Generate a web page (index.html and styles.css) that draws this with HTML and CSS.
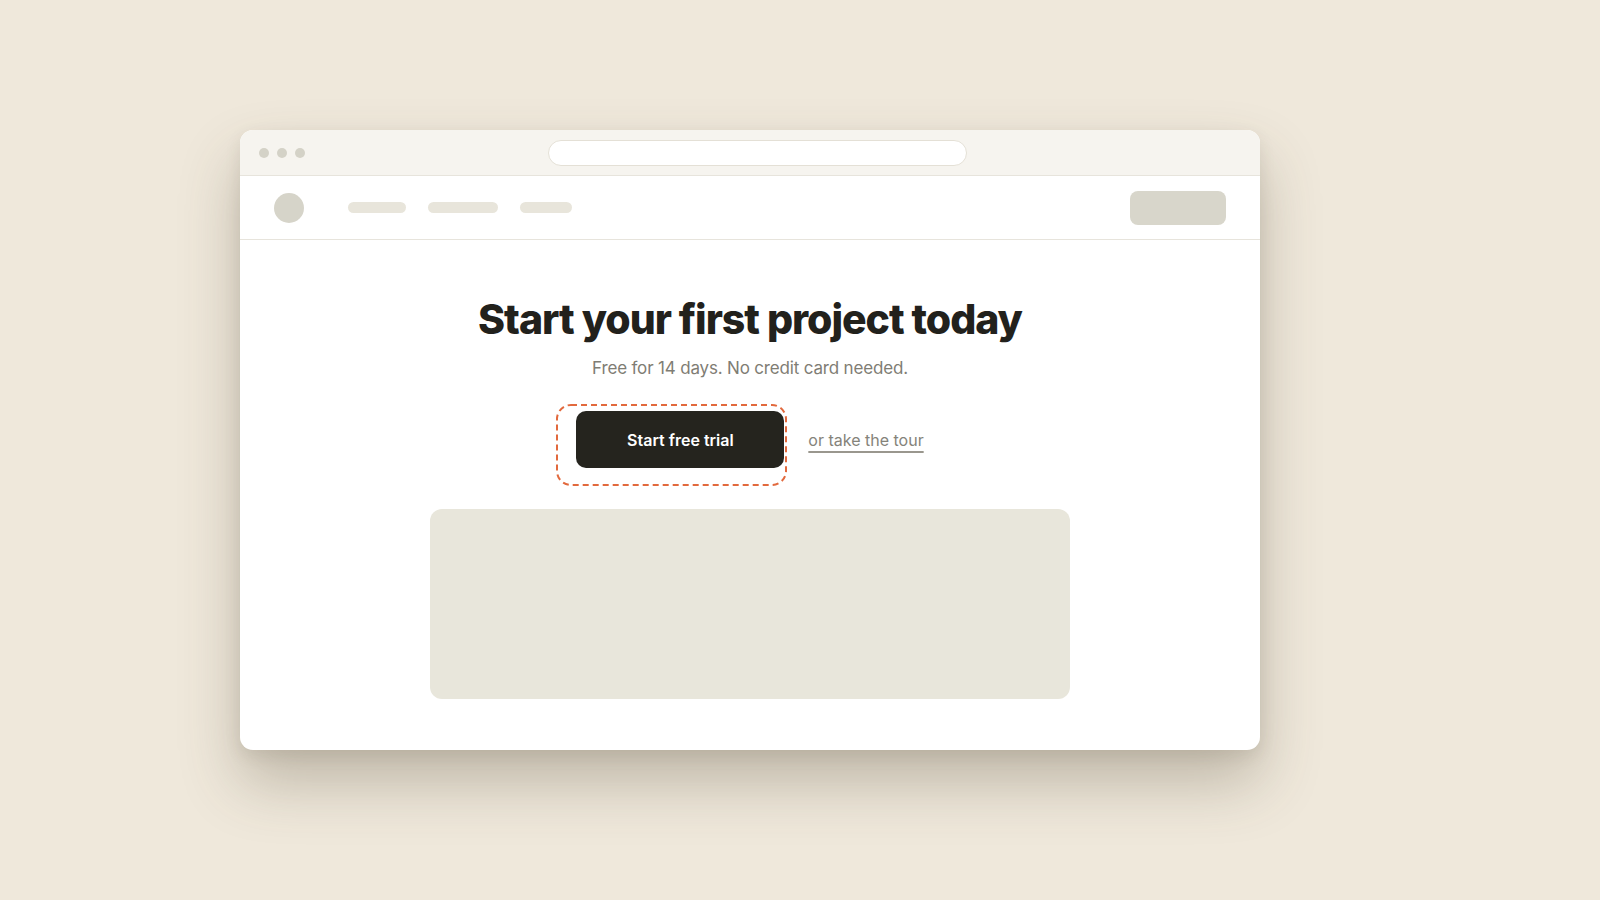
FILE: index.html
```html
<!DOCTYPE html>
<html lang="en">
<head>
    <meta charset="UTF-8">
    <meta name="viewport" content="width=device-width, initial-scale=1.0">
    <title>Start your first project today</title>
    <link rel="stylesheet" href="styles.css">
</head>
<body>
    <div class="window">
        <div class="titlebar">
            <div class="dots">
                <span class="dot"></span>
                <span class="dot"></span>
                <span class="dot"></span>
            </div>
            <div class="urlbar"></div>
        </div>

        <div class="nav">
            <div class="logo"></div>
            <div class="nav-links">
                <span class="pill" style="width: 58px;"></span>
                <span class="pill" style="width: 70px;"></span>
                <span class="pill" style="width: 52px;"></span>
            </div>
            <div class="nav-cta"></div>
        </div>

        <div class="hero">
            <h1>Start your first project today</h1>
            <p class="sub">Free for 14 days. No credit card needed.</p>

            <div class="actions">
                <div class="cta-wrap">
                    <!-- focus ring, drawn a little off the button -->
                    <svg class="ring" width="231" height="82" viewBox="0 0 231 82">
                        <rect x="1" y="1" width="229" height="80" rx="14" ry="14"
                              fill="none" stroke="#e2693d" stroke-width="2" stroke-dasharray="6 4"/>
                    </svg>
                    <button class="cta">Start free trial</button>
                </div>
                <a class="tour" href="#">or take the tour</a>
            </div>

            <div class="preview"></div>
        </div>
    </div>
</body>
</html>
```

FILE: styles.css
```css
body {
    margin: 0;
    padding: 130px 0 0 240px;
    background-color: #efe8db;
    font-family: Inter, "Noto Sans", sans-serif;
    height: 900px;
    box-sizing: border-box;
    overflow: hidden;
}
.window {
    width: 1020px;
    height: 620px;
    background: #fff;
    border-radius: 13px;
    overflow: hidden;
    box-shadow: 0 32px 60px rgba(80, 70, 50, 0.30), 0 6px 16px rgba(80, 70, 50, 0.10);
    display: flex;
    flex-direction: column;
}
.titlebar {
    height: 45px;
    background: #f6f4ef;
    border-bottom: 1px solid #e7e4dc;
    display: flex;
    align-items: center;
    padding-left: 19px;
}
.dots {
    display: flex;
    gap: 8px;
}
.dot {
    width: 10px;
    height: 10px;
    border-radius: 50%;
    background: #d4d2c7;
}
.urlbar {
    margin-left: 243px;
    width: 417px;
    height: 24px;
    background: #fff;
    border: 1px solid #e4e0d6;
    border-radius: 13px;
}
.nav {
    height: 63px;
    border-bottom: 1px solid #e7e4dc;
    display: flex;
    align-items: center;
    padding: 0 34px;
}
.logo {
    width: 30px;
    height: 30px;
    border-radius: 50%;
    background: #d6d4c9;
}
.nav-links {
    display: flex;
    gap: 22px;
    margin-left: 44px;
}
.pill {
    height: 11px;
    border-radius: 6px;
    background: #e8e5db;
}
.nav-cta {
    margin-left: auto;
    width: 96px;
    height: 34px;
    border-radius: 8px;
    background: #d8d6cb;
}
.hero {
    flex: 1;
    display: flex;
    flex-direction: column;
    align-items: center;
    padding-top: 55px;
}
h1 {
    margin: 0;
    font-size: 41px;
    line-height: 48px;
    font-weight: 800;
    letter-spacing: -0.025em;
    color: #22211c;
}
.sub {
    margin: 13px 0 0;
    font-size: 17px;
    line-height: 24px;
    letter-spacing: -0.01em;
    color: #7f7d74;
}
.actions {
    margin-top: 31px;
    display: flex;
    align-items: center;
    gap: 24px;
}
.cta-wrap {
    position: relative;
}
.ring {
    position: absolute;
    left: -20px;
    top: -7px;
    pointer-events: none;
}
.cta {
    display: block;
    width: 208px;
    height: 57px;
    border: none;
    border-radius: 10px;
    background: #25241e;
    color: #fff;
    font-family: Inter, "Noto Sans", sans-serif;
    font-size: 16px;
    font-weight: 600;
    cursor: pointer;
}
.tour {
    font-size: 16px;
    line-height: 24px;
    color: #85837a;
    text-decoration: underline;
    text-decoration-thickness: 2px;
    text-underline-offset: 5px;
    text-decoration-color: #9a978e;
}
.preview {
    margin-top: 41px;
    width: 640px;
    height: 190px;
    border-radius: 12px;
    background: #e8e6db;
}
```
